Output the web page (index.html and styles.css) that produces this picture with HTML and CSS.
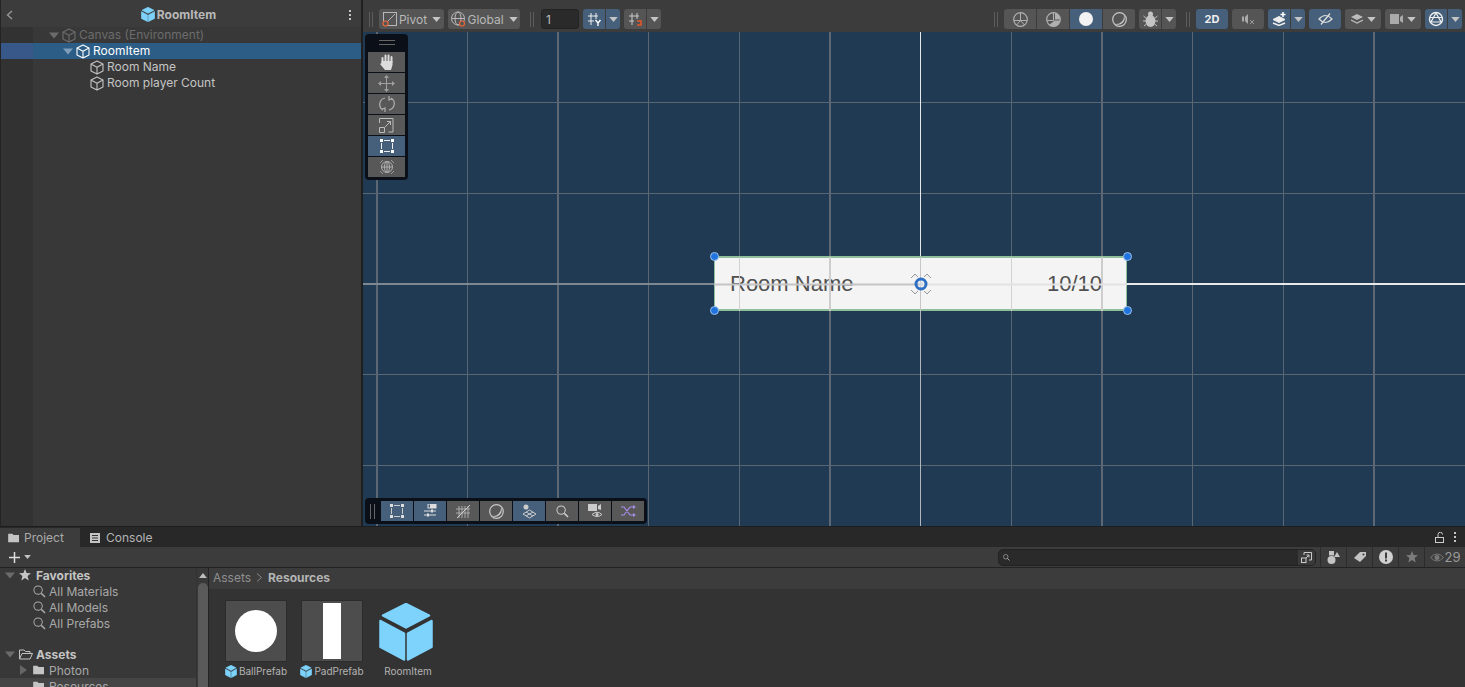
FILE: index.html
```html
<!DOCTYPE html>
<html>
<head>
    <title>RoomItem - Unity</title>
    <link rel="stylesheet" href="styles.css">
</head>
<body>
    <!-- shared icons -->
    <svg class="sprite" width="0" height="0">
        <symbol id="cube-line" viewBox="0 0 14 15">
            <path d="M7 1 L13 4 V11 L7 14 L1 11 V4 Z M1 4 L7 7.2 L13 4 M7 7.2 V14" fill="none" stroke="currentColor" stroke-width="1.1" stroke-linejoin="round"/>
        </symbol>
        <symbol id="cube-solid" viewBox="0 0 54 58">
            <path d="M27 1 L50 12.500 L27 24.500 L4 12.500 Z" fill="#7dd3fc" stroke="#7dd3fc" stroke-width="2.500" stroke-linejoin="round"/>
            <path d="M1.500 18 L25 30.500 V56.500 L1.500 44 Z" fill="#7dd3fc" stroke="#7dd3fc" stroke-width="2.500" stroke-linejoin="round"/>
            <path d="M52.500 18 L29 30.500 V56.500 L52.500 44 Z" fill="#7dd3fc" stroke="#7dd3fc" stroke-width="2.500" stroke-linejoin="round"/>
        </symbol>
        <symbol id="search" viewBox="0 0 14 14">
            <circle cx="5.500" cy="5.500" r="4.500" fill="none" stroke="currentColor" stroke-width="1.100"/>
            <path d="M9 9 L13 13" stroke="currentColor" stroke-width="1.600"/>
        </symbol>
        <symbol id="folder" viewBox="0 0 14 12">
            <path d="M0 1 H5 L6.500 2.500 H13 V11 H0 Z" fill="currentColor"/>
        </symbol>
        <symbol id="caret" viewBox="0 0 10 6">
            <path d="M0 0 H10 L5 6 Z" fill="currentColor"/>
        </symbol>
    </svg>

    <div class="top">
        <!-- Hierarchy -->
        <aside class="hierarchy">
            <div class="hierarchy-head">
                <svg class="back" width="7" height="10" viewBox="0 0 7 10"><path d="M6 1 L1.500 5 L6 9" fill="none" stroke="#9a9a9a" stroke-width="1.300"/></svg>
                <svg class="head-cube" width="14" height="15"><use href="#cube-solid"/></svg>
                <span class="head-title">RoomItem</span>
                <span class="kebab"><i></i><i></i><i></i></span>
            </div>
            <div class="tree">
                <div class="row indent-1 dim"><svg class="arrow" width="10" height="7"><use href="#caret"/></svg><svg class="cube" width="14" height="15"><use href="#cube-line"/></svg>Canvas (Environment)</div>
                <div class="row indent-2 selected"><svg class="arrow" width="10" height="7"><use href="#caret"/></svg><svg class="cube" width="14" height="15"><use href="#cube-line"/></svg>RoomItem</div>
                <div class="row indent-3"><svg class="cube" width="14" height="15"><use href="#cube-line"/></svg>Room Name</div>
                <div class="row indent-3"><svg class="cube" width="14" height="15"><use href="#cube-line"/></svg>Room player Count</div>
            </div>
        </aside>

        <!-- Scene view -->
        <main class="scene-pane">
            <div class="toolbar">
                <span class="grip"></span>
                <button class="btn w-pivot">
                    <svg width="16" height="16" viewBox="0 0 16 16"><rect x="1.500" y="1.500" width="13" height="13" fill="none" stroke="#b8b8b8"/><path d="M4 12 L13 3" stroke="#b8b8b8"/><circle cx="3.500" cy="12.500" r="2.500" fill="#555" stroke="#e8663a" stroke-width="1.200"/></svg>
                    Pivot<svg class="dd" width="9" height="5"><use href="#caret"/></svg>
                </button>
                <button class="btn w-global">
                    <svg width="16" height="16" viewBox="0 0 16 16"><circle cx="8" cy="7.500" r="6.500" fill="none" stroke="#b8b8b8"/><ellipse cx="8" cy="7.500" rx="3" ry="6.500" fill="none" stroke="#b8b8b8"/><path d="M1.500 7.500 H14.500" stroke="#b8b8b8"/><circle cx="12" cy="12.500" r="2.500" fill="#555" stroke="#e8663a" stroke-width="1.200"/></svg>
                    Global<svg class="dd" width="9" height="5"><use href="#caret"/></svg>
                </button>
                <span class="grip grip-mid"></span>
                <div class="num-input">1</div>
                <div class="pair">
                    <button class="btn active w-main"><svg width="15" height="14" viewBox="0 0 15 14"><path d="M1 4 H11 M1 9 H7 M4 1 V13 M9 1 V7" stroke="#eee" fill="none"/><path d="M8.500 8 L11 11 L13.500 8 M11 11 V14" stroke="#fff" fill="none" stroke-width="1.400"/></svg></button>
                    <button class="btn active w-dd"><svg class="dd" width="9" height="5"><use href="#caret"/></svg></button>
                </div>
                <div class="pair">
                    <button class="btn w-main"><svg width="15" height="14" viewBox="0 0 15 14"><path d="M1 4 H11 M1 9 H6 M4 1 V13 M9 1 V7" stroke="#ccc" fill="none"/><path d="M9 9 H13 V13 H9" stroke="#e8562a" fill="none" stroke-width="1.500"/></svg></button>
                    <button class="btn w-dd"><svg class="dd" width="9" height="5"><use href="#caret"/></svg></button>
                </div>

                <div class="toolbar-right">
                    <span class="grip"></span>
                    <div class="segment">
                        <button class="btn w-seg"><svg width="15" height="15" viewBox="0 0 15 15"><circle cx="7.500" cy="7.500" r="6.800" fill="none" stroke="#b0b0b0" stroke-width="1.200"/><path d="M1 8.500 H14 M7.500 1 V8.500 M7.500 8.500 L3.500 13 M7.500 8.500 L11.500 13" stroke="#b0b0b0" fill="none"/></svg></button>
                        <button class="btn w-seg"><svg width="15" height="15" viewBox="0 0 15 15"><circle cx="7.500" cy="7.500" r="6.800" fill="none" stroke="#b0b0b0" stroke-width="1.200"/><path d="M8 8.500 H14 A6.800 6.800 0 0 1 3 13 L8 9 Z M9 1 A6.800 6.800 0 0 1 14 7.500 H9 Z" fill="#b0b0b0"/><path d="M7.500 1 V8.500 H1" stroke="#b0b0b0" fill="none"/></svg></button>
                        <button class="btn active w-seg"><svg width="14" height="14" viewBox="0 0 14 14"><circle cx="7" cy="7" r="7" fill="#f2f2f2"/></svg></button>
                        <button class="btn w-seg"><svg width="15" height="15" viewBox="0 0 15 15"><circle cx="7.500" cy="7.500" r="6.800" fill="none" stroke="#c8c8c8" stroke-width="1.200"/><path d="M11.500 2 A6.800 6.800 0 0 1 2 11.500 A7.500 7.500 0 0 0 11.500 2 Z" fill="#c8c8c8"/></svg></button>
                    </div>
                    <div class="pair">
                        <button class="btn w-main"><svg width="15" height="16" viewBox="0 0 15 16"><ellipse cx="7.500" cy="10" rx="5" ry="6" fill="#c4c4c4"/><circle cx="7.500" cy="3" r="2.500" fill="#c4c4c4"/><path d="M.500 5 L3.500 7.500 M14.500 5 L11.500 7.500 M0 10 H3 M15 10 H12 M1 15 L3.500 13 M14 15 L11.500 13" stroke="#c4c4c4"/></svg></button>
                        <button class="btn w-dd"><svg class="dd" width="9" height="5"><use href="#caret"/></svg></button>
                    </div>
                    <span class="grip grip-small"></span>
                    <button class="btn active w-2d">2D</button>
                    <button class="btn w-seg"><svg width="13" height="11" viewBox="0 0 13 11"><rect x="0" y="2.500" width="2" height="5" fill="#aaa"/><path d="M3 3 L6 0 V10 L3 7 Z" fill="#aaa"/><path d="M8 6 L12 10 M12 6 L8 10" stroke="#999"/></svg></button>
                    <div class="pair">
                        <button class="btn active w-main"><svg width="15" height="14" viewBox="0 0 15 14"><path d="M1 7.500 L7 4.500 L13 7.500 L7 10.500 Z" fill="#eee" stroke="#eee"/><path d="M1 11 L7 13.500 L13 11" fill="none" stroke="#eee" stroke-width="1.400"/><path d="M11 0 V5 M8.500 2.500 H13.500" stroke="#fff" stroke-width="1.500"/></svg></button>
                        <button class="btn active w-dd"><svg class="dd" width="9" height="5"><use href="#caret"/></svg></button>
                    </div>
                    <button class="btn active w-seg"><svg width="15" height="12" viewBox="0 0 15 12"><path d="M1 6 Q7.500 -1 14 6 Q7.500 13 1 6 Z" fill="none" stroke="#ddd" stroke-width="1.200"/><path d="M3 11.500 L12 .500" stroke="#ddd" stroke-width="1.300"/></svg></button>
                    <button class="btn w-wide"><svg width="12" height="10" viewBox="0 0 12 10"><path d="M0 3 L6 0 L12 3 L6 6 Z" fill="#bbb"/><path d="M0 6 L6 9 L12 6" fill="none" stroke="#bbb" stroke-width="1.300"/></svg><svg class="dd" width="9" height="5"><use href="#caret"/></svg></button>
                    <button class="btn w-wide"><svg width="13" height="10" viewBox="0 0 13 10"><rect y="0" width="9" height="10" fill="#aaa"/><path d="M10 3 L13 1 V9 L10 7 Z" fill="#aaa"/></svg><svg class="dd" width="9" height="5"><use href="#caret"/></svg></button>
                    <div class="pair">
                        <button class="btn active w-main"><svg width="16" height="16" viewBox="0 0 16 16"><circle cx="8" cy="8" r="6.500" fill="none" stroke="#eee" stroke-width="1.400"/><path d="M8 2 L3 11 H13 Z" fill="none" stroke="#eee" stroke-width="1.200"/><path d="M1.500 6.500 H14.500" stroke="#eee"/></svg></button>
                        <button class="btn active w-dd"><svg class="dd" width="9" height="5"><use href="#caret"/></svg></button>
                    </div>
                </div>
            </div>

            <div class="scene">
                <svg class="grid" width="1102" height="494">
                    <path d="M104.500 0V494 M285.500 0V494 M376.500 0V494 M648.500 0V494 M829.500 0V494 M920.500 0V494" stroke="#5b6673" fill="none"/>
                    <path d="M14 0V494 M195 0V494 M467 0V494 M739 0V494 M1011 0V494" stroke="#5d6673" stroke-width="2" fill="none"/>
                    <path d="M0 70.500H1102 M0 161.500H1102 M0 342.500H1102 M0 433.500H1102" stroke="#5b6673" fill="none"/>
                    <path d="M0 252H351" stroke="#7d8792" stroke-width="2"/>
                    <path d="M764 252H1102" stroke="#e6e8ea" stroke-width="2"/>
                    <path d="M557.500 0V225" stroke="#e6e8ea"/>
                    <path d="M557.500 278V494" stroke="#aeb5bc"/>
                </svg>

                <!-- the RoomItem rect on the canvas -->
                <div class="room-card">
                    <span class="room-name">Room Name</span>
                    <span class="room-count">10/10</span>
                    <svg class="card-lines" width="413" height="54">
                        <path d="M25.500 0V54 M297.500 0V54" stroke="#d2d2d2"/>
                        <path d="M116 0V54 M388 0V54" stroke="#cdcdcd" stroke-width="2"/>
                        <path d="M206.500 0V54" stroke="#c6c6c6"/>
                        <path d="M0 27.500H206" stroke="#c4c4c4" stroke-width="2"/>
                        <path d="M206 27.500H413" stroke="#e2e2e2" stroke-width="2"/>
                    </svg>
                </div>
                <i class="handle h-tl"></i><i class="handle h-tr"></i><i class="handle h-bl"></i><i class="handle h-br"></i>
                <svg class="pivot" width="24" height="24" viewBox="0 0 24 24">
                    <path d="M2 6 L6 2 L9 5 M22 6 L18 2 L15 5 M2 18 L6 22 L9 19 M22 18 L18 22 L15 19" fill="#eee" stroke="#999" stroke-width="1"/>
                    <circle cx="12" cy="12" r="5" fill="none" stroke="#2e6fc4" stroke-width="3"/>
                    <circle cx="12" cy="12" r="2" fill="#cfd8e2"/>
                </svg>

                <!-- tools overlay -->
                <div class="tools">
                    <div class="tools-grip"></div>
                    <button class="tool"><svg width="16" height="16" viewBox="0 0 16 16"><path d="M3.500 8 V4 M6.500 7 V1.500 M9.500 7 V1.500 M12.500 8 V3" stroke="#dcdcdc" stroke-width="2" stroke-linecap="round"/><path d="M2.500 7 H13.500 V11 L12 16 H6 L1 10 L2.500 9 Z" fill="#dcdcdc"/></svg></button>
                    <button class="tool"><svg width="17" height="17" viewBox="0 0 17 17"><path d="M8.500 2 V15 M2 8.500 H15" stroke="#a0a0a0"/><path d="M8.500 0 L6 3 H11 Z M8.500 17 L6 14 H11 Z M0 8.500 L3 6 V11 Z M17 8.500 L14 6 V11 Z" fill="#a0a0a0"/></svg></button>
                    <button class="tool"><svg width="16" height="16" viewBox="0 0 16 16"><path d="M6 2 A6.500 6.500 0 0 0 4 14 M10 14 A6.500 6.500 0 0 0 12 2" fill="none" stroke="#b0b0b0" stroke-width="1.200"/><path d="M10 0 L10 4 L13 3 M6 16 L6 12 L3 13" fill="none" stroke="#b0b0b0" stroke-width="1.200"/></svg></button>
                    <button class="tool"><svg width="15" height="15" viewBox="0 0 15 15"><path d="M.500 5 V.500 H14 V14 H9.500" fill="none" stroke="#bcbcbc"/><path d="M.500 9.500 H5.500 V14.500 H.500 Z" fill="none" stroke="#bcbcbc"/><path d="M6 9 L11 4 M8 3.500 H11.500 V7" fill="none" stroke="#bcbcbc"/></svg></button>
                    <button class="tool tool-on"><svg width="14" height="14" viewBox="0 0 14 14"><path d="M1.500 4 V10 M12.500 4 V10 M4 1.500 H10 M4 12.500 H10" fill="none" stroke="#eee"/><path d="M0 0h3v3H0z M11 0h3v3h-3z M0 11h3v3H0z M11 11h3v3h-3z" fill="#fff"/></svg></button>
                    <button class="tool"><svg width="16" height="16" viewBox="0 0 16 16"><circle cx="8" cy="8" r="5.500" fill="none" stroke="#b0b0b0"/><path d="M2.500 8 H13.500 M8 2.500 V13.500" stroke="#b0b0b0"/><ellipse cx="8" cy="8" rx="2.500" ry="5.500" fill="none" stroke="#b0b0b0"/><path d="M1 4 L4 1 M15 4 L12 1 M1 12 L4 15 M15 12 L12 15" stroke="#999"/></svg></button>
                </div>

                <!-- overlay strip at the bottom of the view -->
                <div class="overlays">
                    <span class="overlays-grip"></span>
                    <button class="ov on"><svg width="14" height="14" viewBox="0 0 14 14"><path d="M1.500 4 V10 M12.500 4 V10 M4 1.500 H10 M4 12.500 H10" fill="none" stroke="#ccc"/><path d="M0 0h3v3H0z M11 0h3v3h-3z M0 11h3v3H0z M11 11h3v3h-3z" fill="#ddd"/></svg></button>
                    <button class="ov on"><svg width="14" height="14" viewBox="0 0 14 14"><rect x="5" y="0" width="8" height="4" fill="none" stroke="#ddd"/><rect x="7" y="0" width="6" height="4" fill="#ddd"/><path d="M1 7 H13 M1 11 H13" stroke="#ddd"/><rect x="8" y="5.500" width="2" height="3" fill="#ddd"/><rect x="4" y="9.500" width="2" height="3" fill="#ddd"/></svg></button>
                    <button class="ov"><svg width="15" height="15" viewBox="0 0 15 15"><path d="M0 5 H14 M0 9 H14 M3 2 V14 M6 2 V14 M9 2 V14 M12 2 V14" stroke="#aaa" fill="none"/><path d="M1 14 L14 1" stroke="#ccc"/></svg></button>
                    <button class="ov"><svg width="15" height="15" viewBox="0 0 15 15"><circle cx="7.500" cy="7.500" r="6.800" fill="none" stroke="#c8c8c8" stroke-width="1.200"/><path d="M11.500 2 A6.800 6.800 0 0 1 2 11.500 A7.500 7.500 0 0 0 11.500 2 Z" fill="#c8c8c8"/></svg></button>
                    <button class="ov on"><svg width="15" height="15" viewBox="0 0 15 15"><circle cx="4" cy="3" r="2.500" fill="#ccc"/><path d="M1 10 L7.500 6 L14 10 L7.500 14 Z M4 8 L11 12 M11 8 L4 12" fill="none" stroke="#ccc"/></svg></button>
                    <button class="ov"><svg width="13" height="13"><use href="#search"/></svg></button>
                    <button class="ov"><svg width="15" height="14" viewBox="0 0 15 14"><rect x="0" y="0" width="9" height="7" fill="#ccc"/><path d="M10 2 L13 0 V6 L10 5 Z" fill="#ccc"/><path d="M4 10.500 Q9 6 14 10.500 Q9 14.500 4 10.500 Z" fill="none" stroke="#ccc"/><circle cx="9" cy="10.500" r="1.500" fill="#ccc"/></svg></button>
                    <button class="ov"><svg width="15" height="12" viewBox="0 0 15 12"><path d="M0 2 H3 L9 10 H12 M0 10 H3 L9 2 H12" fill="none" stroke="#a78bea" stroke-width="1.200"/><path d="M12 0 L15 2 L12 4 Z M12 8 L15 10 L12 12 Z" fill="#a78bea"/></svg></button>
                </div>
            </div>
        </main>
    </div>

    <!-- Project panel -->
    <section class="bottom">
        <div class="tabs">
            <div class="tab tab-on"><svg class="tab-icon" width="12" height="10"><use href="#folder"/></svg>Project</div>
            <div class="tab"><svg width="11" height="10" viewBox="0 0 11 10"><rect width="10" height="10" fill="#c4c4c4"/><path d="M2 2.500H8 M2 5H8 M2 7.500H8" stroke="#333"/></svg>Console</div>
            <div class="tab-actions">
                <svg width="10" height="11" viewBox="0 0 10 11"><path d="M3 5 V2.500 A2.200 2.200 0 0 1 7.500 2.500" fill="none" stroke="#ccc"/><rect x=".500" y="5.500" width="8" height="5" fill="none" stroke="#ccc"/></svg>
                <span class="kebab"><i></i><i></i><i></i></span>
            </div>
        </div>
        <div class="project-bar">
            <div class="add"><svg width="13" height="13" viewBox="0 0 13 13"><path d="M6.500 1V12 M1 6.500H12" stroke="#ddd" stroke-width="1.500"/></svg><svg class="add-caret" width="7" height="4"><use href="#caret"/></svg></div>
            <div class="search">
                <svg class="search-icon" width="7" height="7"><use href="#search"/></svg>
                <span class="search-open"><svg width="11" height="11" viewBox="0 0 11 11"><path d="M3 3 V.500 H10.500 V8 H8" fill="none" stroke="#ccc"/><rect x=".500" y="6" width="4.500" height="4.500" fill="none" stroke="#ccc"/><path d="M5 6 L8 3 M5.500 3 H8 V5.500" fill="none" stroke="#ccc"/></svg></span>
            </div>
            <div class="filters">
                <span class="filter"><svg width="13" height="13" viewBox="0 0 13 13"><circle cx="4.500" cy="9" r="4" fill="#c4c4c4"/><rect x="2" y="0" width="5" height="4.500" fill="#c4c4c4"/><path d="M7 6 L10 1 L13 6 Z" fill="#c4c4c4"/></svg></span>
                <span class="filter"><svg width="12" height="10" viewBox="0 0 12 10"><path d="M0 6 L6 0 H12 V4 L6 10 Z" fill="#c4c4c4"/><circle cx="9.500" cy="2.500" r="1" fill="#3c3c3c"/></svg></span>
                <span class="filter"><svg width="14" height="14" viewBox="0 0 14 14"><circle cx="7" cy="7" r="7" fill="#d0d0d0"/><rect x="6" y="2.500" width="2" height="6" fill="#3c3c3c"/><rect x="6" y="9.500" width="2" height="2" fill="#3c3c3c"/></svg></span>
                <span class="filter"><svg width="12" height="12" viewBox="0 0 12 12"><path d="M6 0 L7.600 4 L12 4.300 L8.600 7 L9.700 11.500 L6 9 L2.300 11.500 L3.400 7 L0 4.300 L4.400 4 Z" fill="#7c7c7c"/></svg></span>
                <span class="count"><svg width="14" height="9" viewBox="0 0 14 9"><path d="M.500 4.500 Q7 -2.500 13.500 4.500 Q7 11.500 .500 4.500 Z" fill="none" stroke="#777"/><circle cx="7" cy="4.500" r="2.500" fill="#777"/></svg>29</span>
            </div>
        </div>
        <div class="project-body">
            <div class="side">
                <div class="side-tree">
                    <div class="side-row head"><svg class="arrow side-arrow" width="10" height="7"><use href="#caret"/></svg><svg width="12" height="12" viewBox="0 0 12 12"><path d="M6 0 L7.600 4 L12 4.300 L8.600 7 L9.700 11.500 L6 9 L2.300 11.500 L3.400 7 L0 4.300 L4.400 4 Z" fill="#c4c4c4"/></svg><span class="head-text">Favorites</span></div>
                    <div class="side-row item"><svg width="13" height="13"><use href="#search"/></svg>All Materials</div>
                    <div class="side-row item"><svg width="13" height="13"><use href="#search"/></svg>All Models</div>
                    <div class="side-row item"><svg width="13" height="13"><use href="#search"/></svg>All Prefabs</div>
                    <div class="side-gap"></div>
                    <div class="side-row head"><svg class="arrow side-arrow" width="10" height="7"><use href="#caret"/></svg><svg width="14" height="11" viewBox="0 0 14 11"><path d="M.500 10 V1 H5 L6.500 2.500 H11 V4 M.500 10 L3 4.500 H13.500 L11 10 Z" fill="none" stroke="#c4c4c4"/></svg><span class="head-text folder-head">Assets</span></div>
                    <div class="side-row item"><svg class="arrow-right" width="7" height="10" viewBox="0 0 7 10"><path d="M0 0 L7 5 L0 10 Z" fill="#666"/></svg><svg class="folder" width="12" height="10"><use href="#folder"/></svg>Photon</div>
                    <div class="side-row item current"><svg class="folder" width="12" height="10"><use href="#folder"/></svg>Resources</div>
                </div>
                <div class="scrollbar">
                    <svg width="8" height="5" viewBox="0 0 8 5"><path d="M0 5 L4 0 L8 5 Z" fill="#bbb"/></svg>
                    <div class="thumb"></div>
                </div>
            </div>
            <div class="browser">
                <div class="crumbs">Assets<svg width="7" height="9" viewBox="0 0 7 9"><path d="M1 .500 L5.500 4.500 L1 8.500" fill="none" stroke="#888"/></svg><b>Resources</b></div>
                <div class="assets">
                    <div class="asset">
                        <div class="thumb-box"><div class="ball"></div></div>
                        <div class="asset-label"><svg width="12" height="13"><use href="#cube-solid"/></svg>BallPrefab</div>
                    </div>
                    <div class="asset">
                        <div class="thumb-box"><div class="pad"></div></div>
                        <div class="asset-label"><svg width="12" height="13"><use href="#cube-solid"/></svg>PadPrefab</div>
                    </div>
                    <div class="asset">
                        <svg class="big-cube" width="54" height="58"><use href="#cube-solid"/></svg>
                        <div class="asset-label">RoomItem</div>
                    </div>
                </div>
            </div>
        </div>
    </section>
</body>
</html>
```

FILE: styles.css
```css
* { box-sizing: border-box; }

html, body {
    margin: 0;
    height: 100%;
    overflow: hidden;
}

body {
    width: 1465px;
    height: 687px;
    display: flex;
    flex-direction: column;
    background: #282828;
    color: #c4c4c4;
    font-family: Inter, "Liberation Sans", sans-serif;
    font-size: 12px;
}

button {
    font: inherit;
    color: inherit;
    border: 0;
    padding: 0;
}

svg { flex: none; display: block; }

.sprite { position: absolute; }

.top {
    height: 526px;
    flex: none;
    display: flex;
}

/* hierarchy */
.hierarchy {
    width: 363px;
    display: flex;
    flex-direction: column;
    border-left: 1px solid #242424;
    border-right: 2px solid #1f1f1f;
    background: #383838;
}

.hierarchy-head {
    height: 27px;
    flex: none;
    display: flex;
    align-items: center;
    justify-content: center;
    position: relative;
    padding: 1px 5px 0 0;
    background: #3c3c3c;
    font-weight: 700;
}

.back { position: absolute; left: 5px; top: 10px; }
.head-cube { margin-right: 2px; }
.head-title { color: #b8b8b8; }

.kebab {
    display: flex;
    flex-direction: column;
    gap: 2px;
}
.kebab i {
    width: 2px;
    height: 2px;
    background: #c4c4c4;
}
.hierarchy-head .kebab { position: absolute; right: 10px; top: 10px; }

.tree {
    flex: 1;
    background: linear-gradient(to right, #323232 32px, #383838 32px);
}

.row {
    height: 16px;
    display: flex;
    align-items: center;
    line-height: 16px;
}
.row .cube { margin-right: 3px; }
.arrow { color: #6b6b6b; margin-right: 3px; }

.indent-1 { padding-left: 48px; }
.indent-2 { padding-left: 62px; }
.indent-3 { padding-left: 89px; }

.dim { color: #6c6c6c; }
.selected {
    color: #fff;
    background: linear-gradient(to right, #39588a 32px, #2c5d87 32px);
}
.selected .arrow { color: #7f9db8; }

/* scene */
.scene-pane {
    flex: 1;
    display: flex;
    flex-direction: column;
    min-width: 0;
}

.toolbar {
    height: 32px;
    flex: none;
    display: flex;
    align-items: center;
    gap: 4px;
    padding: 6px 3px 0 6px;
    background: #3c3c3c;
}

.grip {
    width: 4px;
    height: 15px;
    border-left: 1px solid #5c5c5c;
    border-right: 1px solid #5c5c5c;
    margin-right: 2px;
}
.grip-mid { margin: 0 3px 0 6px; }
.grip-small { margin: 0 2px 0 6px; }

.btn {
    height: 20px;
    display: flex;
    align-items: center;
    justify-content: center;
    background: #555;
    border-radius: 3px;
    color: #b8b8b8;
}
.btn.active { background: #46607c; color: #eee; }
.dd { color: #c4c4c4; }

.w-pivot { width: 65px; gap: 1px; padding: 0 3px; }
.w-pivot .dd { margin-left: 4px; }
.w-global { width: 72px; gap: 1px; padding: 0 3px; }
.w-global .dd { margin-left: 4px; }
.w-main { width: 22px; border-radius: 3px 0 0 3px; }
.w-dd { width: 14px; border-radius: 0 3px 3px 0; }
.w-seg { width: 32px; }
.w-2d { width: 32px; font-size: 11px; font-weight: 700; }
.w-wide { width: 36px; gap: 4px; }

.pair { display: flex; gap: 1px; }

.num-input {
    width: 38px;
    height: 20px;
    padding-left: 4px;
    line-height: 20px;
    background: #2a2a2a;
    border: 1px solid #232323;
    border-radius: 3px;
    color: #bdbdbd;
}

.toolbar-right {
    margin-left: auto;
    display: flex;
    align-items: center;
    gap: 4px;
}

.segment { display: flex; gap: 1px; }
.segment .btn { border-radius: 0; }
.segment .btn:first-child { border-radius: 3px 0 0 3px; }
.segment .btn:last-child { border-radius: 0 3px 3px 0; }

.scene {
    flex: 1;
    position: relative;
    overflow: hidden;
    background: #203a54;
}

.grid { position: absolute; left: 0; top: 0; }

.room-card {
    position: absolute;
    left: 351px;
    top: 224px;
    width: 413px;
    height: 55px;
    display: flex;
    align-items: center;
    justify-content: space-between;
    padding: 0 24px 0 15px;
    background: #f4f4f4;
    border: 1px solid #8fbf9a;
    border-bottom-width: 2px;
    border-top-width: 2px;
    font-family: "Liberation Sans", sans-serif;
    font-size: 22px;
    color: #505050;
}
.card-lines { position: absolute; left: -1px; top: -1px; }

.handle {
    position: absolute;
    width: 9px;
    height: 9px;
    border-radius: 50%;
    background: #1f74e0;
    border: 1px solid #9fc0e8;
}
.h-tl { left: 347px; top: 220px; }
.h-tr { left: 760px; top: 220px; }
.h-bl { left: 347px; top: 274px; }
.h-br { left: 760px; top: 274px; }

.pivot { position: absolute; left: 546px; top: 240px; }

.tools {
    position: absolute;
    left: 2px;
    top: 2px;
    width: 43px;
    height: 146px;
    display: flex;
    flex-direction: column;
    align-items: center;
    gap: 1px;
    padding-top: 4px;
    background: #0b1018;
    border-radius: 4px;
}
.tools-grip {
    width: 16px;
    height: 5px;
    margin: 2px 0 6px;
    border-top: 1px solid #666;
    border-bottom: 1px solid #666;
}
.tool {
    width: 37px;
    height: 20px;
    display: flex;
    align-items: center;
    justify-content: center;
    background: #585858;
}
.tool-on { background: #46607c; }

.overlays {
    position: absolute;
    left: 2px;
    top: 466px;
    width: 282px;
    height: 26px;
    display: flex;
    align-items: center;
    gap: 1px;
    padding-left: 5px;
    background: #0b1018;
    border-radius: 4px;
}
.overlays-grip {
    width: 5px;
    height: 15px;
    margin-right: 5px;
    border-left: 1px solid #666;
    border-right: 1px solid #666;
}
.ov {
    width: 32px;
    height: 20px;
    display: flex;
    align-items: center;
    justify-content: center;
    background: #585858;
    color: #ccc;
}
.ov.on { background: #46607c; }

/* project panel */
.bottom {
    flex: 1;
    display: flex;
    flex-direction: column;
    min-height: 0;
    background: #333;
}

.tabs {
    height: 21px;
    flex: none;
    display: flex;
    align-items: flex-end;
    background: #282828;
    border-top: 1px solid #1d1d1d;
}
.tab {
    height: 19px;
    display: flex;
    align-items: center;
    gap: 5px;
    padding-left: 9px;
    width: 80px;
    color: #b4b4b4;
}
.tab + .tab { padding-left: 10px; }
.tab-on { background: #3c3c3c; color: #aaa; padding-left: 8px; gap: 4px; }
.tab-icon { color: #c4c4c4; }
.tab-actions {
    margin-left: auto;
    align-self: center;
    display: flex;
    align-items: center;
    gap: 9px;
    padding-right: 9px;
}

.project-bar {
    height: 21px;
    flex: none;
    display: flex;
    align-items: center;
    background: #3c3c3c;
    border-bottom: 1px solid #232323;
}
.add {
    display: flex;
    align-items: center;
    gap: 3px;
    padding-left: 8px;
}
.add-caret { color: #c4c4c4; }

.search {
    margin-left: auto;
    width: 318px;
    height: 17px;
    display: flex;
    align-items: center;
    justify-content: space-between;
    padding-left: 4px;
    background: #2a2a2a;
    border: 1px solid #222;
    border-radius: 5px;
    color: #ccc;
}
.search-open {
    width: 17px;
    height: 15px;
    display: flex;
    align-items: center;
    justify-content: center;
    background: #3a3a3a;
    border-radius: 0 4px 4px 0;
}

.filters { display: flex; height: 20px; margin-left: 4px; }
.filter {
    width: 26px;
    display: flex;
    align-items: center;
    justify-content: center;
    border-left: 1px solid #2c2c2c;
}
.count {
    width: 41px;
    display: flex;
    align-items: center;
    justify-content: center;
    gap: 1px;
    border-left: 1px solid #2c2c2c;
    color: #9a9a9a;
    font-size: 13px;
}

.project-body {
    flex: 1;
    display: flex;
    min-height: 0;
}

.side {
    width: 209px;
    flex: none;
    display: flex;
    border-right: 1px solid #232323;
    background: #383838;
    overflow: hidden;
}
.side-tree { flex: 1; margin-top: -1px; }
.side-row {
    height: 16px;
    display: flex;
    align-items: center;
    gap: 4px;
    white-space: nowrap;
    color: #a0a0a0;
}
.side-row.head {
    padding-left: 5px;
    font-weight: 700;
    color: #c4c4c4;
}
.side-arrow { margin-right: 0; }
.head-text { margin-left: 1px; }
.folder-head { margin-left: -1px; }
.side-row.item { padding-left: 33px; color: #a8a8a8; gap: 3px; }
.side-row.item .arrow-right { margin-left: -13px; margin-right: 3px; }
.side-row .folder { color: #c4c4c4; margin-right: 1px; }
.side-row.current { background: #454545; }
.side-gap { height: 15px; }

.scrollbar {
    width: 12px;
    flex: none;
    display: flex;
    flex-direction: column;
    align-items: center;
    padding-top: 5px;
    background: #383838;
    border-left: 1px solid #333;
}
.thumb {
    width: 10px;
    flex: 1;
    margin-top: 5px;
    background: #5a5a5a;
    border-radius: 5px 5px 0 0;
}

.browser {
    flex: 1;
    display: flex;
    flex-direction: column;
    min-width: 0;
}
.crumbs {
    height: 21px;
    flex: none;
    display: flex;
    align-items: center;
    gap: 5px;
    padding: 0 0 2px 4px;
    background: #3c3c3c;
    color: #8f8f8f;
}
.crumbs b { color: #b4b4b4; }

.assets {
    display: flex;
    padding: 11px 0 0 9px;
}
.asset {
    width: 76px;
    display: flex;
    flex-direction: column;
    align-items: center;
}
.thumb-box {
    width: 62px;
    height: 62px;
    display: flex;
    align-items: center;
    justify-content: center;
    background: #4d4d4d;
    border: 1px solid #2c2c2c;
}
.ball {
    width: 42px;
    height: 42px;
    border-radius: 50%;
    background: #fff;
}
.pad {
    width: 18px;
    height: 56px;
    background: #fff;
}
.big-cube { margin: 3px 5px 1px 0; }
.asset-label {
    height: 18px;
    display: flex;
    align-items: center;
    gap: 2px;
    font-size: 10px;
    color: #b4b4b4;
    white-space: nowrap;
}
```
